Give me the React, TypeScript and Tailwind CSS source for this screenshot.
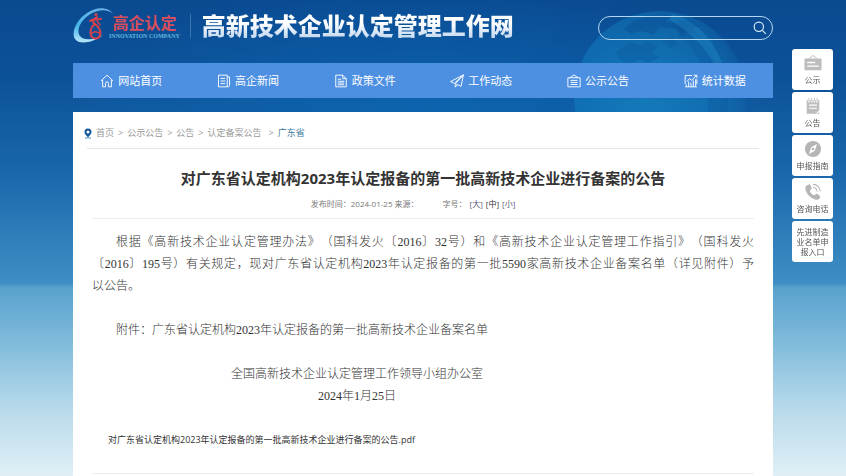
import type { ReactNode } from "react";

const iconProps = {
  viewBox: "0 0 24 24",
  fill: "none",
  stroke: "currentColor",
  strokeWidth: 1.6,
  className: "h-[14px] w-[14px] shrink-0",
  "aria-hidden": true,
};

const navItems: { label: string; icon: ReactNode }[] = [
  {
    label: "网站首页",
    icon: (
      <svg {...iconProps}>
        <path d="M1.5 12 12 2l10.5 10M4.5 10v12h5v-6a2.5 2.5 0 0 1 5 0v6h5V10" />
      </svg>
    ),
  },
  {
    label: "高企新闻",
    icon: (
      <svg {...iconProps}>
        <path d="M2.5 2h15v20h-15zM17.5 5h4v14.5a2.5 2.5 0 0 1-4 2M6 7.5h8M6 12h8M6 16.5h8" />
      </svg>
    ),
  },
  {
    label: "政策文件",
    icon: (
      <svg {...iconProps}>
        <path d="M3 2h12l6 6v14H3zM15 2v6h6M6.5 9h6M6.5 12.5h11M6.5 15.5h11M6.5 18.5h11" />
      </svg>
    ),
  },
  {
    label: "工作动态",
    icon: (
      <svg {...iconProps}>
        <path d="M23 1.5 1 13l6.5 3L23 1.5 19 21l-8-3.5M23 1.5 9 17v5.5l3.5-4" />
      </svg>
    ),
  },
  {
    label: "公示公告",
    icon: (
      <svg {...iconProps}>
        <path d="M1.5 6.5h21V22h-21zM5 6.5 12 1.5l7 5M6 11h12M6 14.5h12M6 18h12" />
      </svg>
    ),
  },
  {
    label: "统计数据",
    icon: (
      <svg {...iconProps}>
        <path d="M14 2.5H2v15M22 9v8.5M5 13l4.5-5 4 3 8-8.5M16.5 2H22v5M4 22v-4M8 22v-9M12 22v-7M16 22V11M20 22V9M2 22h20" />
      </svg>
    ),
  },
];

const sideItems: { label: string; icon?: ReactNode }[] = [
  {
    label: "公示",
    icon: (
      <svg viewBox="0 0 20 20" className="h-[18px] w-[18px]" aria-hidden>
        <path d="M5 5.5 10 1.5l5 4" fill="none" stroke="#bdbdbd" />
        <rect x="0.5" y="5" width="19" height="13" rx="1" fill="#bdbdbd" />
        <path d="M3.5 9.5h9M3.5 13.5h13" stroke="#fff" strokeWidth="1.6" />
      </svg>
    ),
  },
  {
    label: "公告",
    icon: (
      <svg viewBox="0 0 20 20" className="h-[18px] w-[18px]" aria-hidden>
        <path d="M3 3.5h14v11L13 18.5H3z" fill="#bdbdbd" />
        <path d="M5.5 1v5M8.5 1v5M11.5 1v5M14.5 1v5" stroke="#fff" strokeWidth="1.8" />
        <path d="M5.5 1v4M8.5 1v4M11.5 1v4M14.5 1v4" stroke="#bdbdbd" />
        <path d="M5.5 9h9M5.5 12.5h9" stroke="#fff" strokeWidth="1.3" />
        <path d="m13 18.5 4-1.5-.5 2z" fill="#bdbdbd" />
      </svg>
    ),
  },
  {
    label: "申报指南",
    icon: (
      <svg viewBox="0 0 20 20" className="h-[18px] w-[18px]" aria-hidden>
        <circle cx="10" cy="10" r="9" fill="#b5b5b5" />
        <path d="m14.5 4.5-2.5 7.5-6.5 3.5L8 8z" fill="#fff" />
        <circle cx="10" cy="10" r="1.5" fill="#b5b5b5" />
      </svg>
    ),
  },
  {
    label: "咨询电话",
    icon: (
      <svg viewBox="0 0 20 20" className="h-[18px] w-[18px]" aria-hidden>
        <path
          d="M3.5 2.5 6 1.5c1 0 2.5 3 2.5 4.5 0 1-2 1.5-2 2.5 0 1.5 3 5 5 5 1 0 1.5-1.5 2.5-1.5 1.5.5 4 2 4 3.5 0 1-1.5 3-3.5 3C8 18.5 1.5 11 1.5 5.5c0-1.5 1-2.5 2-3z"
          fill="#b5b5b5"
        />
        <path d="M10 5c2.5 0 4.5 2 4.5 4.5M10 1.5c4.5 0 8 3.5 8 8" fill="none" stroke="#b5b5b5" strokeWidth="1.2" />
      </svg>
    ),
  },
  { label: "先进制造业名单申报入口" },
];

const crumbs = ["首页", "公示公告", "公告", "认定备案公告"];

function Globe() {
  return (
    <svg
      viewBox="0 0 200 180"
      className="absolute top-0 left-1/2 ml-[137px] h-[180px] w-[200px]"
      aria-hidden
    >
      <defs>
        <radialGradient id="globe" cx="0.42" cy="0.45" r="0.6">
          <stop offset="0" stopColor="#1b9ad0" stopOpacity="0.5" />
          <stop offset="0.7" stopColor="#1590cc" stopOpacity="0.34" />
          <stop offset="1" stopColor="#1590cc" stopOpacity="0.05" />
        </radialGradient>
      </defs>
      <circle cx="100" cy="97" r="86" fill="url(#globe)" />
      <path
        d="M72 22c12-6 26-8 38-6l-5 6 14 1-6 6-13-2-6 7-13-3-10 3-7-5zM112 24l14-5 14 7-8 3 4 5-10-2-4 5z"
        fill="#0a4f93"
        opacity="0.5"
      />
      <path
        d="M56 52l14-10 12 3 5-4 10 6-5 6 8 4-12 6-8-4-10 5-10-4zM102 40l10-3 6 7-8 4z"
        fill="#0a559b"
        opacity="0.35"
      />
      <path d="M118 36c22 12 34 46 30 110 14-10 20-26 20-44-5-36-22-70-50-84z" fill="#0a4f98" opacity="0.25" />
      <path d="M112 14c32 8 54 40 58 84-12-36-32-62-60-78z" fill="#2aa5dc" opacity="0.25" />
    </svg>
  );
}

function Logo() {
  return (
    <a href="#" className="flex items-center" aria-label="高企认定">
      <svg viewBox="0 0 42 38" className="-mt-px h-[38px] w-[42px] shrink-0" aria-hidden>
        <defs>
          <linearGradient id="swoosh" x1="0" y1="0" x2="0" y2="1">
            <stop offset="0" stopColor="#6db4e8" />
            <stop offset="0.5" stopColor="#45b4e8" />
            <stop offset="1" stopColor="#b8e6fa" />
          </linearGradient>
        </defs>
        <path
          d="M40 8C36 1 24 0 14 7 3 14-2 27 2 33c4 6 18 4 28-4-9 5-19 6-23 1C3 25 7 15 16 9c9-6 19-6 24-1z"
          fill="url(#swoosh)"
        />
        <g fill="none" stroke="#d8414c" strokeLinecap="round">
          <circle cx="23" cy="8.5" r="1.6" fill="#d8414c" stroke="none" />
          <path d="M17 15c2-2 5-2 11-2M24 11c-5 3-5 6-1 8" strokeWidth="2" />
          <path d="M22 18c-6 4-6 14 0 14.5 7 0 7-9 1-13.5" strokeWidth="2" />
          <path d="M24 15l3 4M18 28c2-3 7-3 9 0" strokeWidth="1.4" />
        </g>
      </svg>
      <span className="-ml-[6px] flex flex-col items-center pt-px">
        <span className="text-base leading-5 font-bold text-[#d94d5c]">高企认定</span>
        <span className="font-['Liberation_Serif',serif] text-[6px] leading-[7px] font-bold whitespace-nowrap text-[#62b6df]">
          INNOVATION COMPANY
        </span>
      </span>
    </a>
  );
}

function Header() {
  return (
    <header className="flex h-[63px] items-center pb-[12px]">
      <Logo />
      <span className="ml-[10px] h-6 w-px bg-[#3a74ad]" />
      <h1 className="ml-[11px] bg-gradient-to-b from-white from-40% to-[#b4cdea] bg-clip-text text-2xl leading-8 font-black whitespace-nowrap text-transparent">
        高新技术企业认定管理工作网
      </h1>
      <form
        role="search"
        className="mt-1 ml-auto flex h-6 w-[175px] items-center rounded-full border border-[#b5d6ef] pr-[5px] pl-3"
      >
        <input type="search" aria-label="搜索" className="min-w-0 flex-1 bg-transparent text-xs text-white outline-none" />
        <button type="submit" aria-label="搜索" className="text-[#d9ecfa]">
          <svg viewBox="0 0 24 24" fill="none" stroke="currentColor" strokeWidth="2" className="h-[14px] w-[14px]">
            <circle cx="10" cy="10" r="8" />
            <path d="m16 16 6 6" />
          </svg>
        </button>
      </form>
    </header>
  );
}

function SideBar() {
  return (
    <aside className="fixed top-[49px] right-[13px] flex w-[41px] flex-col gap-[2px]">
      {sideItems.map((item) => (
        <a
          key={item.label}
          href="#"
          className="flex h-[41px] flex-col items-center justify-center gap-[3px] rounded-[3px] bg-white text-center text-[8px] leading-[10px] text-[#555]"
        >
          {item.icon}
          <span className={item.icon ? "whitespace-nowrap" : "px-1"}>{item.label}</span>
        </a>
      ))}
    </aside>
  );
}

export default function App() {
  return (
    <div className="relative min-h-screen overflow-hidden bg-[radial-gradient(ellipse_360px_130px_at_50%_110px,#0a6cb899,#0a6cb800),linear-gradient(180deg,#0a4a91_0px,#0c5299_80px,#1966ab_170px,#3f8fc5_284px,#57a2cd_287px,#86bedd_350px,#b5d9ea_405px,#e0eff6_476px)] font-['Open_Sans','Noto_Sans_CJK_SC',sans-serif]">
      <Globe />
      <div className="relative mx-auto w-full max-w-[700px]">
        <Header />
        <nav className="grid h-[35px] grid-cols-6 bg-[#4d90e2]">
          {navItems.map((item) => (
            <a
              key={item.label}
              href="#"
              className="flex items-center justify-center gap-1 text-[11px] leading-4 whitespace-nowrap text-white"
            >
              {item.icon}
              {item.label}
            </a>
          ))}
        </nav>

        <main className="mt-[14px] bg-white px-[14px] pt-[13px] pb-6">
          {/* Breadcrumb */}
          <div className="flex items-center border-b border-[#e6e6e6] pb-[7px] text-[9px] leading-4 text-[#999]">
            <svg viewBox="0 0 16 20" className="mr-1 -ml-[3px] h-[11px] w-[8px]" aria-hidden>
              <path
                d="M8 0a7 7 0 0 0-7 7c0 4 4 7 7 11 3-4 7-7 7-11a7 7 0 0 0-7-7zm0 4a3 3 0 1 1 0 6 3 3 0 0 1 0-6z"
                fill="#0f5597"
              />
              <path d="M2 19h12" stroke="#4a90d0" strokeWidth="2" />
            </svg>
            {crumbs.map((crumb) => (
              <span key={crumb} className="group flex">
                <a href="#">{crumb}</a>
                <span className="mx-1 group-last-of-type:ml-[7px]">&gt;</span>
              </span>
            ))}
            <a href="#" className="text-[#3f7a9e]">
              广东省
            </a>
          </div>

          <article className="px-[5px]">
            <h2 className="mt-[17px] text-center text-[15px] leading-6 font-bold text-[#333]">
              对广东省认定机构2023年认定报备的第一批高新技术企业进行备案的公告
            </h2>
            <div className="mt-[6px] flex justify-center border-b border-[#eee] pr-5 pb-[6px] text-[8px] leading-4 text-[#777]">
              <span>发布时间：2024-01-25 来源：</span>
              <span className="ml-6 flex gap-[3px]">
                字号：
                <button className="text-[#557]">[大]</button>
                <button className="text-[#333]">[中]</button>
                <button className="text-[#557]">[小]</button>
              </span>
            </div>

            <div className="pt-3 font-['Liberation_Serif','Noto_Sans_CJK_SC',serif] text-xs leading-[22px] font-light text-[#333] [text-spacing-trim:space-all]">
              <p className="indent-6">
                <span className="block [text-align-last:justify]">
                  根据《高新技术企业认定管理办法》（国科发火〔2016〕32号）和《高新技术企业认定管理工作指引》（国科发火
                </span>
                <span className="block indent-0 [text-align-last:justify]">
                  〔2016〕195号）有关规定，现对广东省认定机构2023年认定报备的第一批5590家高新技术企业备案名单（详见附件）予
                </span>
                <span className="block indent-0">以公告。</span>
              </p>
              <p className="mt-[22px] indent-6">附件：广东省认定机构2023年认定报备的第一批高新技术企业备案名单</p>
              <div className="mt-[22px] ml-[137px] w-[256px] text-center">
                <p>全国高新技术企业认定管理工作领导小组办公室</p>
                <p>2024年1月25日</p>
              </div>
            </div>

            <div className="mt-6 border-b border-[#eee] pb-6 pl-4 text-[9px] leading-[18px] text-[#333]">
              <a href="#">对广东省认定机构2023年认定报备的第一批高新技术企业进行备案的公告.pdf</a>
            </div>
          </article>
        </main>
      </div>
      <SideBar />
    </div>
  );
}
